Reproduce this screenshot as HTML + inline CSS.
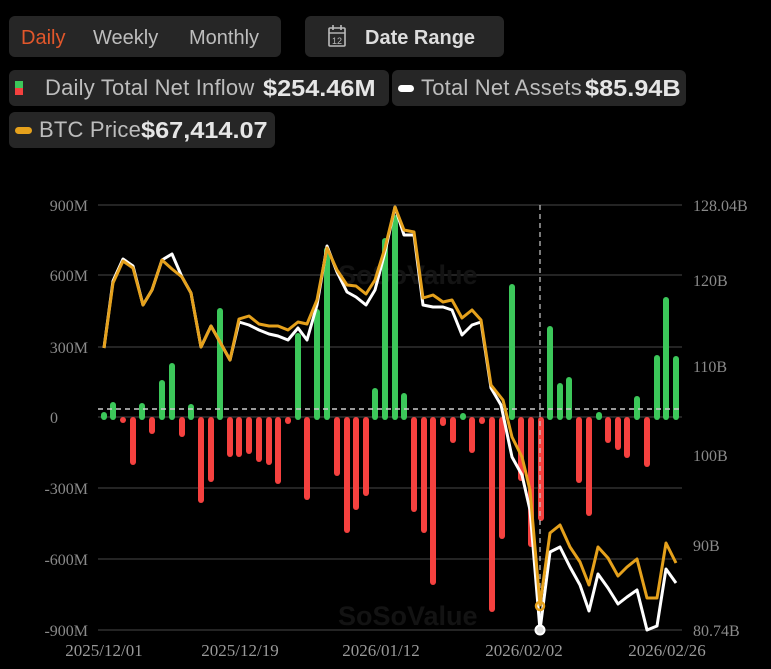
<!DOCTYPE html>
<html><head><meta charset="utf-8"><style>
body{margin:0;width:771px;height:669px;background:#000;overflow:hidden;font-family:"Liberation Sans",sans-serif;position:relative}
.box{position:absolute;background:#262626;border-radius:6px}
.t{position:absolute;color:#bdbdbd;font-size:20px;white-space:nowrap;line-height:24px}
.r2{font-size:22px;letter-spacing:0.2px}
.b{position:absolute;color:#e6e6e6;font-size:21px;font-weight:bold;white-space:nowrap;line-height:24px}
.bb{font-size:23px;transform:scaleX(1.1);transform-origin:0 50%}
</style></head><body>
<div class="box" style="left:9px;top:16px;width:272px;height:41px"></div>
<div class="t" style="left:21px;top:26px;color:#e2572b">Daily</div>
<div class="t" style="left:93px;top:26px">Weekly</div>
<div class="t" style="left:189px;top:26px">Monthly</div>
<div class="box" style="left:305px;top:16px;width:199px;height:41px"></div>
<svg width="20" height="24" style="position:absolute;left:327px;top:24px" viewBox="0 0 20 24"><rect x="2" y="4" width="16" height="18" rx="1" fill="none" stroke="#bbb" stroke-width="1.6"/><line x1="2" y1="9" x2="18" y2="9" stroke="#bbb" stroke-width="1.4"/><line x1="6" y1="1" x2="6" y2="6" stroke="#bbb" stroke-width="1.6"/><line x1="14" y1="1" x2="14" y2="6" stroke="#bbb" stroke-width="1.6"/><text x="10" y="20" font-size="9" fill="#bbb" text-anchor="middle" font-family="Liberation Sans">12</text></svg>
<div class="b" style="left:365px;top:26px;color:#ddd;font-size:20px">Date Range</div>

<div class="box" style="left:9px;top:70px;width:380px;height:36px"></div>
<div style="position:absolute;left:15px;top:81px;width:8px;height:14px;background:linear-gradient(#3cc75a 50%,#f5413f 50%)"></div>
<div class="t r2" style="left:45px;top:76px">Daily Total Net Inflow</div>
<div class="b bb" style="left:263px;top:76px">$254.46M</div>
<div class="box" style="left:392px;top:70px;width:294px;height:36px"></div>
<div style="position:absolute;left:398px;top:85px;width:16px;height:7px;border-radius:4px;background:#fff"></div>
<div class="t r2" style="left:421px;top:76px">Total Net Assets</div>
<div class="b bb" style="left:585px;top:76px">$85.94B</div>
<div class="box" style="left:9px;top:112px;width:266px;height:36px"></div>
<div style="position:absolute;left:15px;top:127px;width:17px;height:7px;border-radius:4px;background:#e5a11c"></div>
<div class="t r2" style="left:39px;top:118px">BTC Price</div>
<div class="b bb" style="left:141px;top:118px">$67,414.07</div>

<svg width="771" height="669" style="position:absolute;left:0;top:0" font-family="Liberation Serif" font-size="16" fill="#8a8a8a">
<g stroke="#3a3a3a" stroke-width="1.2">
<line x1="98" x2="682" y1="205" y2="205"/><line x1="98" x2="682" y1="275" y2="275"/><line x1="98" x2="682" y1="347" y2="347"/><line x1="98" x2="682" y1="417" y2="417"/><line x1="98" x2="682" y1="488" y2="488"/><line x1="98" x2="682" y1="559" y2="559"/><line x1="98" x2="682" y1="630" y2="630"/></g>
<g text-anchor="end"><text x="88" y="211">900M</text><text x="88" y="281">600M</text><text x="88" y="353">300M</text><text x="58" y="423">0</text><text x="88" y="494">-300M</text><text x="88" y="565">-600M</text><text x="88" y="636">-900M</text></g>
<g><text x="693" y="211">128.04B</text><text x="693" y="286">120B</text><text x="693" y="372">110B</text><text x="693" y="461">100B</text><text x="693" y="551">90B</text><text x="693" y="636">80.74B</text></g>
<g font-size="17" fill="#999" text-anchor="middle"><text x="104" y="656">2025/12/01</text><text x="240" y="656">2025/12/19</text><text x="381" y="656">2026/01/12</text><text x="524" y="656">2026/02/02</text><text x="667" y="656">2026/02/26</text></g>
<text x="338" y="284" font-family="Liberation Sans" font-size="27" font-weight="bold" fill="#131313">SoSoValue</text>
<text x="338" y="625" font-family="Liberation Sans" font-size="27" font-weight="bold" fill="#131313">SoSoValue</text>
<g stroke-width="6" stroke-linecap="round">
<g stroke="#3cc75a">
<line x1="104" x2="104" y1="417" y2="415"/><line x1="113" x2="113" y1="417" y2="405"/><line x1="142" x2="142" y1="417" y2="406"/><line x1="162" x2="162" y1="417" y2="383"/><line x1="172" x2="172" y1="417" y2="366"/><line x1="191" x2="191" y1="417" y2="407"/><line x1="220" x2="220" y1="417" y2="311"/><line x1="298" x2="298" y1="417" y2="336"/><line x1="317" x2="317" y1="417" y2="312"/><line x1="327" x2="327" y1="417" y2="250"/><line x1="375" x2="375" y1="417" y2="391"/><line x1="385" x2="385" y1="417" y2="241"/><line x1="395" x2="395" y1="417" y2="218"/><line x1="404" x2="404" y1="417" y2="396"/><line x1="463" x2="463" y1="417" y2="416"/><line x1="512" x2="512" y1="417" y2="287"/><line x1="550" x2="550" y1="417" y2="329"/><line x1="560" x2="560" y1="417" y2="386"/><line x1="569" x2="569" y1="417" y2="380"/><line x1="599" x2="599" y1="417" y2="415"/><line x1="637" x2="637" y1="417" y2="399"/><line x1="657" x2="657" y1="417" y2="358"/><line x1="666" x2="666" y1="417" y2="300"/><line x1="676" x2="676" y1="417" y2="359"/></g>
<g stroke="#f5413f">
<line x1="123" x2="123" y1="420" y2="420"/><line x1="133" x2="133" y1="420" y2="462"/><line x1="152" x2="152" y1="420" y2="431"/><line x1="182" x2="182" y1="420" y2="434"/><line x1="201" x2="201" y1="420" y2="500"/><line x1="211" x2="211" y1="420" y2="479"/><line x1="230" x2="230" y1="420" y2="454"/><line x1="239" x2="239" y1="420" y2="454"/><line x1="249" x2="249" y1="420" y2="451"/><line x1="259" x2="259" y1="420" y2="459"/><line x1="269" x2="269" y1="420" y2="462"/><line x1="278" x2="278" y1="420" y2="481"/><line x1="288" x2="288" y1="420" y2="421"/><line x1="307" x2="307" y1="420" y2="497"/><line x1="337" x2="337" y1="420" y2="473"/><line x1="347" x2="347" y1="420" y2="530"/><line x1="356" x2="356" y1="420" y2="507"/><line x1="366" x2="366" y1="420" y2="493"/><line x1="414" x2="414" y1="420" y2="509"/><line x1="424" x2="424" y1="420" y2="530"/><line x1="433" x2="433" y1="420" y2="582"/><line x1="443" x2="443" y1="420" y2="423"/><line x1="453" x2="453" y1="420" y2="440"/><line x1="472" x2="472" y1="420" y2="450"/><line x1="482" x2="482" y1="420" y2="421"/><line x1="492" x2="492" y1="420" y2="609"/><line x1="502" x2="502" y1="420" y2="536"/><line x1="521" x2="521" y1="420" y2="478"/><line x1="531" x2="531" y1="420" y2="544"/><line x1="541" x2="541" y1="420" y2="518"/><line x1="579" x2="579" y1="420" y2="480"/><line x1="589" x2="589" y1="420" y2="513"/><line x1="608" x2="608" y1="420" y2="440"/><line x1="618" x2="618" y1="420" y2="447"/><line x1="627" x2="627" y1="420" y2="455"/><line x1="647" x2="647" y1="420" y2="464"/></g></g>
<line x1="98" x2="682" y1="409" y2="409" stroke="#ccc" stroke-width="1.5" stroke-dasharray="5,4"/>
<line x1="540" x2="540" y1="205" y2="630" stroke="#ccc" stroke-width="1.2" stroke-dasharray="5,4"/>
<polyline fill="none" stroke="#fff" stroke-width="3" stroke-linejoin="round" points="104,348 113,281 123,259 133,266 143,305 152,290 162,260 172,254 182,277 191,293 201,347 211,326 220,342 230,360 239,322 249,325 259,330 269,334 278,336 288,340 298,328 307,340 317,305 327,246 337,272 347,292 356,297 366,305 375,290 385,252 395,207 404,235 414,235 423,305 433,307 443,307 452,310 462,335 472,325 481,322 491,388 501,405 512,457 522,475 530,510 540,630 550,552 560,547 570,567 580,585 589,611 598,574 608,588 618,604 627,597 637,590 647,630 657,626 666,569 676,583"/>
<polyline fill="none" stroke="#e5a11c" stroke-width="3" stroke-linejoin="round" points="104,348 113,283 123,261 133,268 143,305 152,290 162,260 172,269 182,277 191,293 201,347 211,326 220,342 230,360 239,319 249,316 259,324 269,326 278,326 288,330 298,322 307,324 317,300 327,248 337,270 347,285 356,286 366,294 375,280 385,248 395,207 404,230 414,232 423,298 433,295 443,302 452,300 462,318 472,310 481,320 491,385 503,400 512,437 522,457 530,490 540,605 550,533 560,525 570,547 580,562 589,585 598,547 608,558 618,576 627,567 637,559 647,598 657,598 666,543 676,563"/>
<circle cx="540" cy="630" r="4.5" fill="#ddd" stroke="#fff" stroke-width="2"/>
<circle cx="540" cy="606" r="4" fill="none" stroke="#e5a11c" stroke-width="2.5"/>
</svg>
</body></html>
